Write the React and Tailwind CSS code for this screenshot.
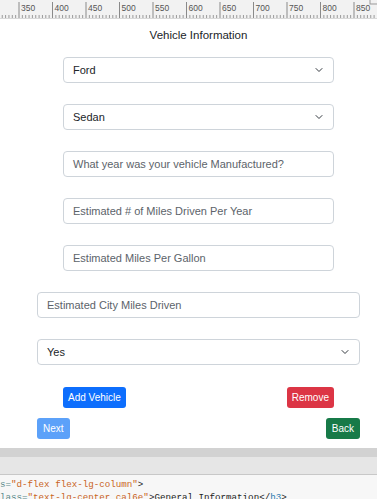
import React from 'react'

const labels = [350, 400, 450, 500, 550, 600, 650, 700, 750, 800, 850]

const Ruler = () => {
  const ticks = []
  for (let i = 0; i < 120; i++) {
    const x = 19 + i * 3.35 - 33.5
    if (x < 0 || x > 377) continue
    const major = i % 10 === 0
    ticks.push(<line key={i} x1={x} x2={x} y1={major ? 2 : 15} y2={18} stroke={major ? '#8a8a8a' : '#9a9a9a'} strokeWidth="1" />)
  }
  return (
    <svg width="377" height="19" className="block bg-[#f2f2f2]">
      {ticks}
      {labels.map((l, i) => (
        <text key={l} x={21 + i * 33.5} y="11" fontSize="8.5" fill="#555" fontFamily="Liberation Sans, Arial, sans-serif">{l}</text>
      ))}
      <rect x="370" y="-2" width="8" height="6" fill="none" stroke="#999" />
      <line x1="0" x2="377" y1="18.5" y2="18.5" stroke="#d8d8d8" />
    </svg>
  )
}

const Chevron = () => (
  <svg width="8" height="8" viewBox="0 0 16 16" className="shrink-0">
    <path d="M2 5l6 6 6-6" fill="none" stroke="#343a40" strokeWidth="2" strokeLinecap="round" strokeLinejoin="round" />
  </svg>
)

const Select = ({ value, wide }) => (
  <div className={`${wide ? 'ml-[37px] w-[323px]' : 'ml-[63px] w-[271px]'} h-[26px] border border-[#ced4da] rounded-[4px] bg-white flex items-center justify-between pl-[9px] pr-[10px] text-[11px] text-[#212529]`}>
    <span>{value}</span>
    <Chevron />
  </div>
)

const Input = ({ placeholder, wide }) => (
  <div className={`${wide ? 'ml-[37px] w-[323px]' : 'ml-[63px] w-[271px]'} h-[26px] border border-[#ced4da] rounded-[4px] bg-white flex items-center pl-[9px] text-[11px] text-[#5c636a]`}>
    {placeholder}
  </div>
)

export default function App() {
  return (
    <div className="w-[377px] h-[499px] overflow-hidden bg-white font-['Liberation_Sans',Arial,sans-serif]">
      <Ruler />
      <h3 className="ml-[37px] w-[323px] text-center text-[11.5px] text-[#212529] mt-[9px] leading-[14px]">Vehicle Information</h3>
      <div className="flex flex-col gap-[21px] mt-[15px]">
        <Select value="Ford" />
        <Select value="Sedan" />
        <Input placeholder="What year was your vehicle Manufactured?" />
        <Input placeholder="Estimated # of Miles Driven Per Year" />
        <Input placeholder="Estimated Miles Per Gallon" />
        <Input placeholder="Estimated City Miles Driven" wide />
        <Select value="Yes" wide />
      </div>
      <div className="ml-[63px] w-[271px] flex justify-between mt-[22px]">
        <button className="h-[21px] px-[5px] bg-[#0d6efd] text-white text-[10px] rounded-[3px]">Add Vehicle</button>
        <button className="h-[21px] px-[5px] bg-[#dc3545] text-white text-[10px] rounded-[3px]">Remove</button>
      </div>
      <div className="ml-[37px] w-[323px] flex justify-between mt-[10px]">
        <button className="h-[21px] px-[6px] bg-[#5ca1f9] text-white text-[10px] rounded-[3px]">Next</button>
        <button className="h-[21px] px-[6px] bg-[#177a48] text-white text-[10px] rounded-[3px]">Back</button>
      </div>
      <div className="mt-[9px] h-[9px] bg-[#d2d2d2]" />
      <div className="h-[18px] bg-[#e6e6e6] border-b border-[#c8c8c8]" />
      <div className="bg-[#f7f7f7] pt-[3px] font-['Liberation_Mono',monospace] text-[9.2px] leading-[13px] text-[#222] whitespace-pre">
        <div><span className="text-[#5a8a8a]">s=</span><span className="text-[#c9641e]">"d-flex flex-lg-column"</span>&gt;</div>
        <div><span className="text-[#5a8a8a]">lass=</span><span className="text-[#c9641e]">"text-lg-center cal6e"</span>&gt;General Information&lt;/<span className="text-[#2a7ab0]">h3</span>&gt;</div>
      </div>
    </div>
  )
}
